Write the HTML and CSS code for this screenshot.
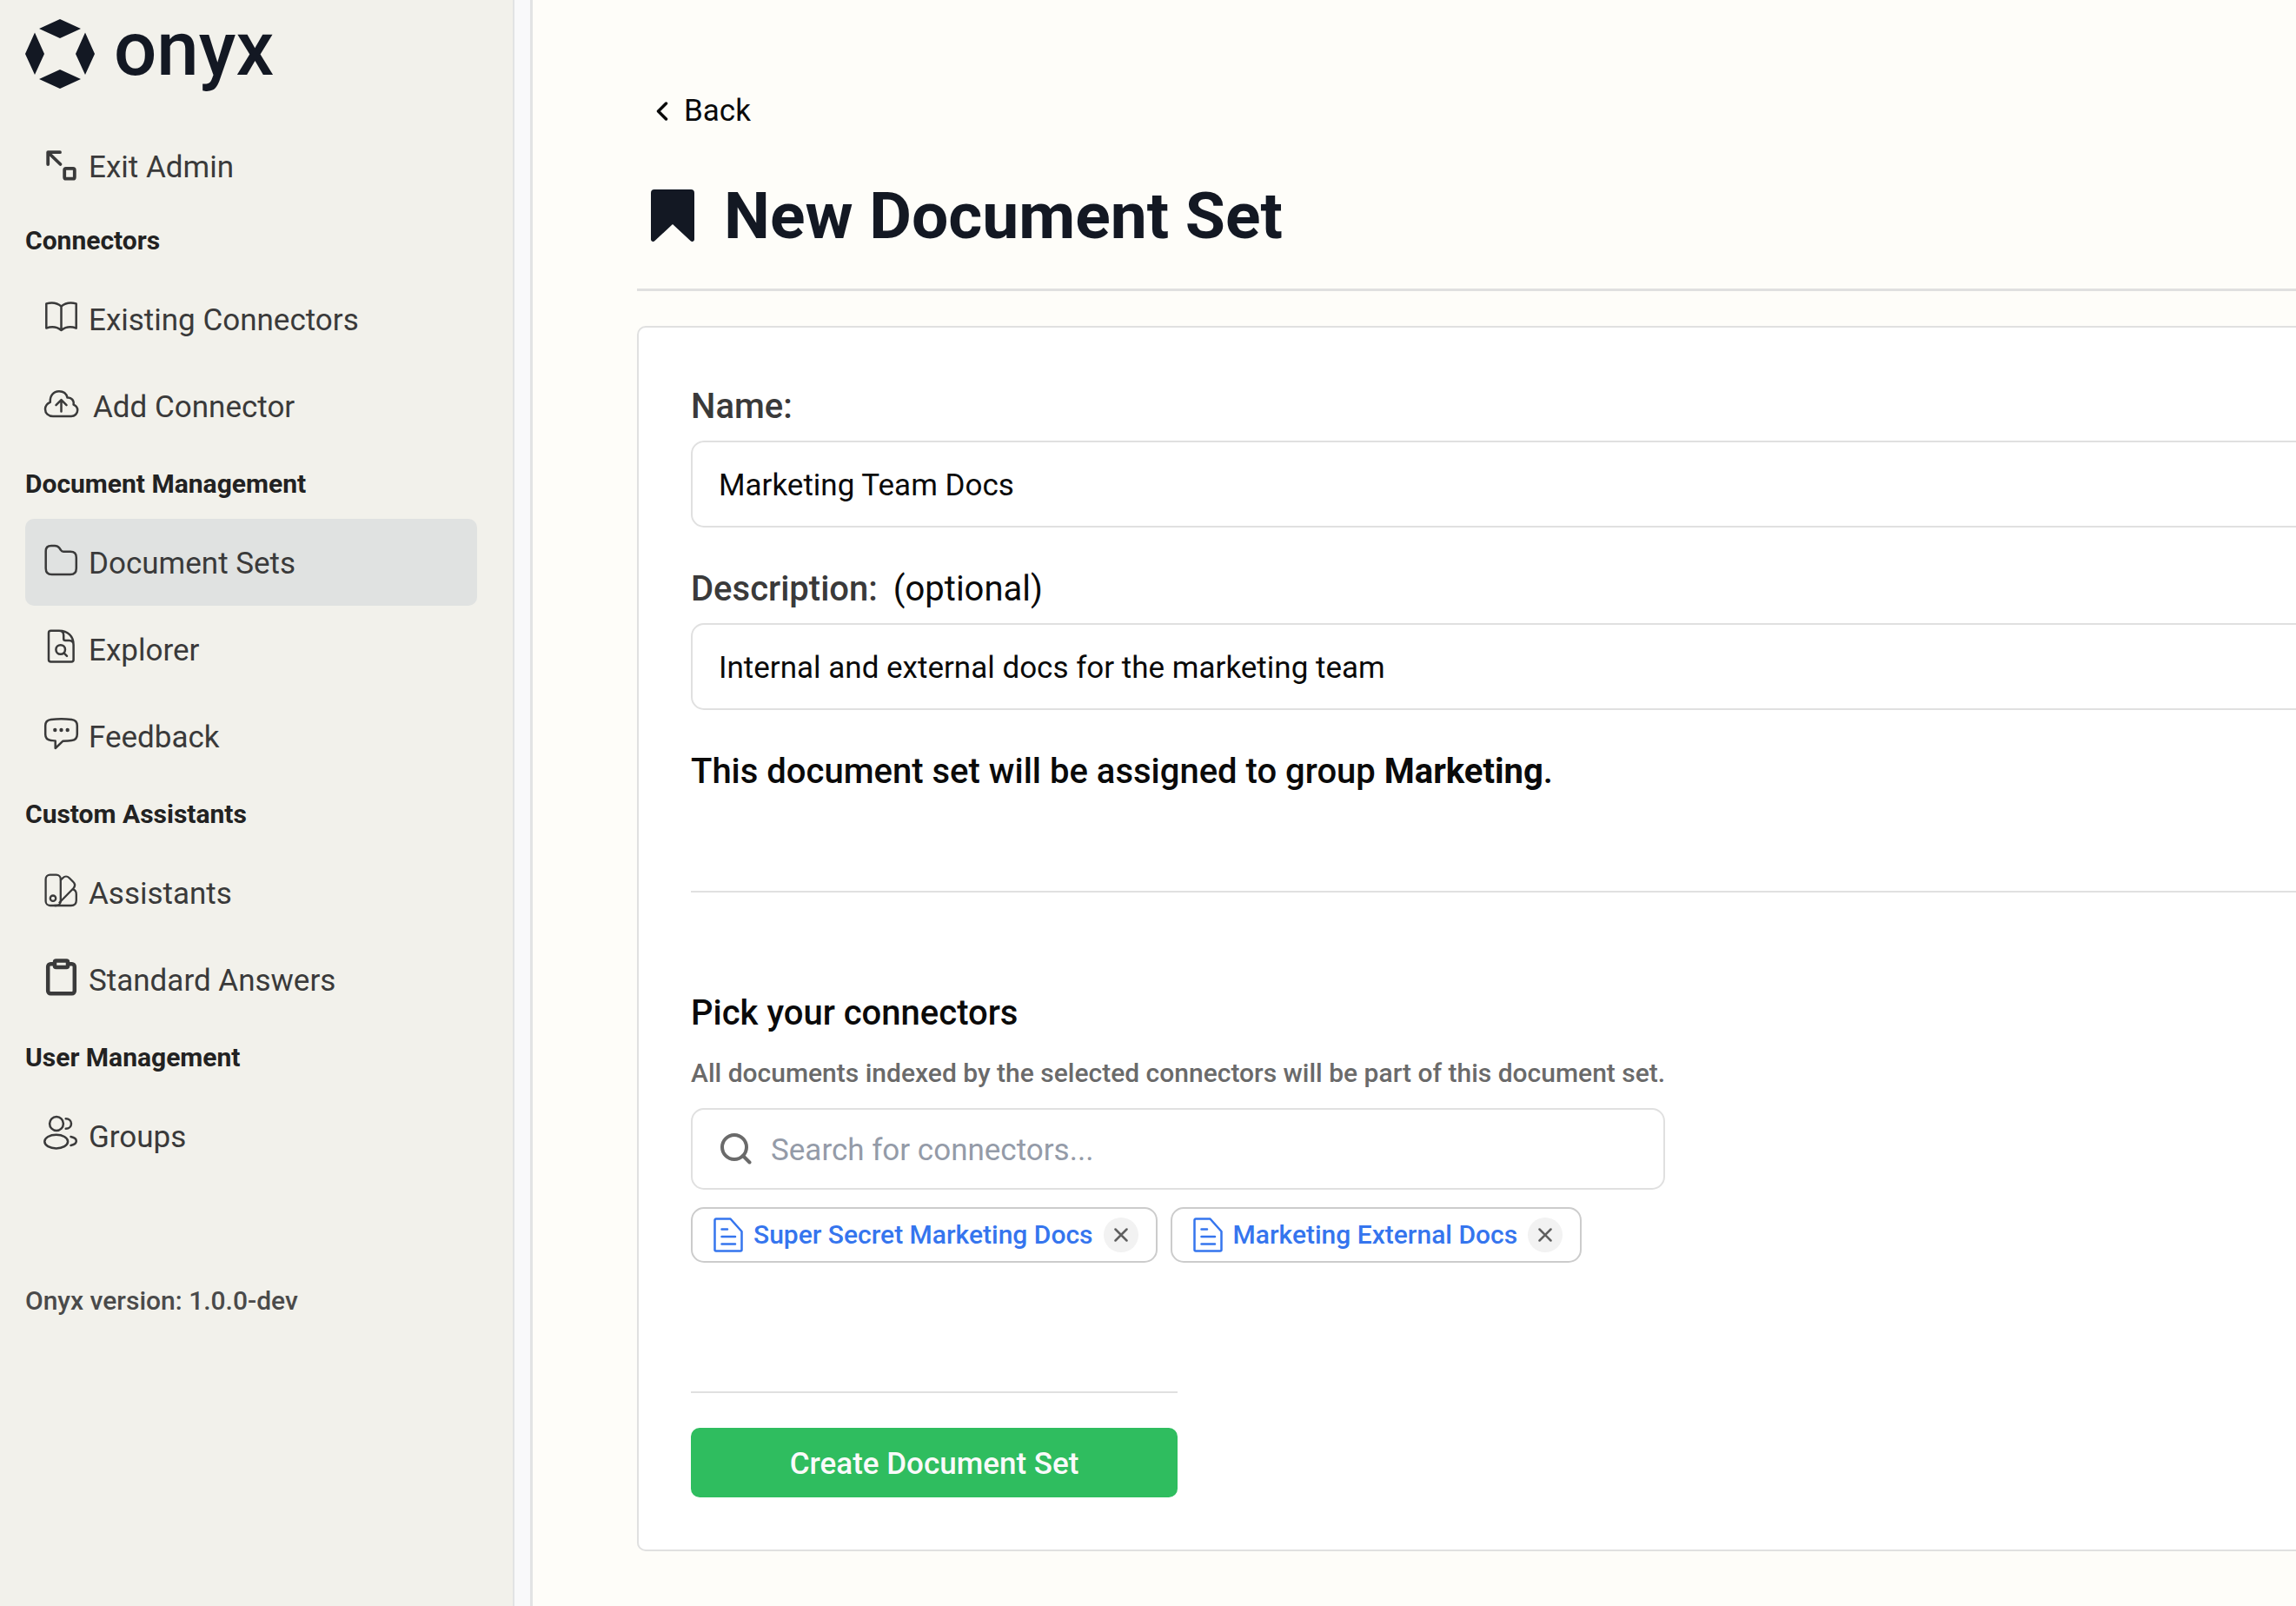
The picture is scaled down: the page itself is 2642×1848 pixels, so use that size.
FILE: index.html
```html
<!DOCTYPE html>
<html lang="en">
<head>
<meta charset="utf-8">
<meta name="viewport" content="width=device-width, initial-scale=1">
<title>New Document Set</title>
<link rel="stylesheet" href="styles.css">
</head>
<body>
<div class="app">
  <aside class="sidebar">
    <a class="brand" href="#">
      <svg class="brand-mark" viewBox="0 0 80 80" aria-hidden="true">
        <path d="M40 0 64 11 40 22 16 11ZM40 58 64 69 40 80 16 69ZM11 15.5 22 40 11 64 0 40ZM69 15.5 80 40 69 64 58 40Z"/>
      </svg>
      <span class="brand-name">onyx</span>
    </a>

    <nav class="nav">
      <a class="nav-item" href="#">
        <svg class="nav-icon" viewBox="0 2 40 48" aria-hidden="true"><g stroke-width="3.8"><path d="M5.2 22V8.2H19M6 9 19.5 22"/><rect x="24.2" y="26.9" width="11.6" height="11.8" rx="1.8"/></g></svg>
        <span>Exit Admin</span>
      </a>

      <h2 class="nav-heading nav-heading-first">Connectors</h2>
      <a class="nav-item" href="#">
        <svg class="nav-icon" viewBox="0 2 40 48" aria-hidden="true"><path d="M20.5 9.5C15.5 5.2 9 4.8 3.3 6.4V34.6C9 32.6 15.5 33 20.5 37C25.5 33 32 32.6 37.7 34.6V6.4C32 4.8 25.5 5.2 20.5 9.5V37"/></svg>
        <span>Existing Connectors</span>
      </a>
      <a class="nav-item nav-item-spaced" href="#">
        <svg class="nav-icon" viewBox="0 2 40 48" aria-hidden="true"><path d="M11 36C5.5 36 2 32.5 2 27.8C2 24 4.4 21.2 7.8 19.8C7.2 12.5 11.5 7.3 18 7.3C23 7.3 26.4 10 27.6 14.6C32.2 14.2 35.4 17.8 34.6 22.6C37.6 23.8 39.2 26.3 39.2 29C39.2 33 36 36 32 36ZM20.5 30.5V17.5M14.5 23.2 20.5 17.2 26.5 23.2"/></svg>
        <span>Add Connector</span>
      </a>

      <h2 class="nav-heading">Document Management</h2>
      <a class="nav-item nav-item-active" href="#" aria-current="page">
        <svg class="nav-icon" viewBox="0 2 40 48" aria-hidden="true"><path d="M2.7 11C2.7 7 5 5 9 5H13C16 5 17 5.8 18.3 7.5L20 10C20.8 11.5 21.5 11.8 23 11.8H31C35.5 11.8 37.8 14 37.8 18.5V31C37.8 35.5 35.5 38 31 38H9.5C5 38 2.7 35.5 2.7 31Z"/></svg>
        <span>Document Sets</span>
      </a>
      <a class="nav-item" href="#">
        <svg class="nav-icon" viewBox="0 2 40 48" aria-hidden="true"><path d="M8.5 2.8H18C28 2.8 34.6 9 34.6 19V36a2.5 2.5 0 0 1-2.5 2.5H8.5A2.5 2.5 0 0 1 6 36V5.3A2.5 2.5 0 0 1 8.5 2.8ZM18 2.8C21.5 2.8 23.2 4.5 23.2 8V12A2 2 0 0 0 25.2 14H29.5C32.8 14 34.6 16 34.6 19"/><circle cx="19.7" cy="24.5" r="5.3"/><path d="M23.5 28.3 27 31.8"/></svg>
        <span>Explorer</span>
      </a>
      <a class="nav-item" href="#">
        <svg class="nav-icon" viewBox="0 2 40 48" aria-hidden="true"><path d="M8.5 5C16 4 25 4 32.5 5C37 5.6 38.8 8 38.8 12V22C38.8 26.5 37 28.5 32.5 29C29 29.5 26 29.6 22.5 29.7L13.7 38V29.5C11.5 29.2 10 29.1 8.5 28.9C4 28.3 2.2 26.5 2.2 22V12C2.2 8 4 5.6 8.5 5Z"/><g class="dot"><circle cx="13.3" cy="17" r="2.2"/><circle cx="20.5" cy="17" r="2.2"/><circle cx="27.7" cy="17" r="2.2"/></g></svg>
        <span>Feedback</span>
      </a>

      <h2 class="nav-heading">Custom Assistants</h2>
      <a class="nav-item" href="#">
        <svg class="nav-icon" viewBox="0 2 40 48" aria-hidden="true"><g stroke-width="2.3"><rect x="2.6" y="3.7" width="17.2" height="35.3" rx="5"/><circle cx="11" cy="30.7" r="3.2"/><path d="M20 9.5 22.3 7.2C24.5 5 27.5 5 29.7 7.2L34 11.5C36.6 14 36.6 16.8 34.4 19.2L18.5 35.5M33.8 20.4C36.6 21 37.8 23 37.8 26V33C37.8 37 35.8 39 31.8 39H13"/></g></svg>
        <span>Assistants</span>
      </a>
      <a class="nav-item" href="#">
        <svg class="nav-icon" viewBox="0 2 40 48" aria-hidden="true"><g stroke-width="4.5"><path d="M12 6.2H8.2A3 3 0 0 0 5.2 9.2V37.2A3 3 0 0 0 8.2 40.2H32.8A3 3 0 0 0 35.8 37.2V9.2A3 3 0 0 0 32.8 6.2H29"/><rect x="13" y="2.6" width="15" height="7.5" rx="1.5"/></g></svg>
        <span>Standard Answers</span>
      </a>

      <h2 class="nav-heading">User Management</h2>
      <a class="nav-item" href="#">
        <svg class="nav-icon" viewBox="0 2 40 48" aria-hidden="true"><circle cx="15" cy="10" r="7.9"/><ellipse cx="14.7" cy="30.6" rx="13.4" ry="7.9"/><path d="M25.7 4.2C29.3 4.2 32 6.7 32 10C32 13.3 29.3 15.8 25.7 15.8M31.5 25C35.3 25.8 37.8 27.7 37.8 30C37.8 32.3 35.3 34.2 31.5 35"/></svg>
        <span>Groups</span>
      </a>
    </nav>

    <p class="version">Onyx version: 1.0.0-dev</p>
  </aside>
  <div class="gutter"></div>

  <main class="main">
    <div class="page">
      <button class="back" type="button">
        <svg class="back-icon" viewBox="0 0 14 22" aria-hidden="true"><path d="M11.5 2 2.5 11 11.5 20"/></svg>
        <span>Back</span>
      </button>

      <header class="page-header">
        <svg class="page-icon" viewBox="0 0 50 60" aria-hidden="true"><path d="M4 0H46a4 4 0 0 1 4 4V57.5a2.5 2.5 0 0 1-4.3 1.7L25 40 4.3 59.2A2.5 2.5 0 0 1 0 57.5V4a4 4 0 0 1 4-4Z"/></svg>
        <h1 class="page-title">New Document Set</h1>
      </header>

      <form class="card">
        <div class="field">
          <label class="label" for="name">Name:</label>
          <input class="input" id="name" type="text" value="Marketing Team Docs">
        </div>
        <div class="field">
          <div class="label-row">
            <label class="label" for="description">Description:</label>
            <span class="optional">(optional)</span>
          </div>
          <input class="input" id="description" type="text" value="Internal and external docs for the marketing team">
        </div>
        <p class="notice">This document set will be assigned to group <strong>Marketing</strong>.</p>

        <hr class="divider">

        <section class="picker">
          <h2 class="picker-title">Pick your connectors</h2>
          <p class="picker-hint">All documents indexed by the selected connectors will be part of this document set.</p>
          <div class="search">
            <svg class="search-icon" viewBox="0 0 36 36" aria-hidden="true"><circle cx="16" cy="16" r="14"/><path d="M26 26 33.5 33.5"/></svg>
            <input class="search-input" type="text" placeholder="Search for connectors..." aria-label="Search for connectors">
          </div>
          <div class="chips">
            <div class="chip">
              <svg class="chip-icon" viewBox="0 0 34 40" aria-hidden="true"><path d="M3 1.5H19.5L32.5 16V37a1.5 1.5 0 0 1-1.5 1.5H3A1.5 1.5 0 0 1 1.5 37V3A1.5 1.5 0 0 1 3 1.5ZM9.5 13.500H16M9.5 22H25M9.5 30.500H25"/></svg>
              <span>Super Secret Marketing Docs</span>
              <button class="chip-remove" type="button" aria-label="Remove Super Secret Marketing Docs"><svg viewBox="0 0 16 16" aria-hidden="true"><path d="M1.5 1.5 14.5 14.5M14.5 1.5 1.5 14.5"/></svg></button>
            </div>
            <div class="chip">
              <svg class="chip-icon" viewBox="0 0 34 40" aria-hidden="true"><path d="M3 1.5H19.5L32.5 16V37a1.5 1.5 0 0 1-1.5 1.5H3A1.5 1.5 0 0 1 1.5 37V3A1.5 1.5 0 0 1 3 1.5ZM9.5 13.500H16M9.5 22H25M9.5 30.500H25"/></svg>
              <span>Marketing External Docs</span>
              <button class="chip-remove" type="button" aria-label="Remove Marketing External Docs"><svg viewBox="0 0 16 16" aria-hidden="true"><path d="M1.5 1.5 14.5 14.5M14.5 1.5 1.5 14.5"/></svg></button>
            </div>
          </div>
        </section>

        <div class="actions">
          <button class="submit" type="submit">Create Document Set</button>
        </div>
      </form>
    </div>
  </main>
</div>
</body>
</html>
```
FILE: styles.css
```css
* {
  box-sizing: border-box;
}

body {
  margin: 0;
  background: #fefdf9;
  color: #0a0a0a;
  font-family: Roboto, "Liberation Sans", sans-serif;
  font-size: 35px;
  line-height: 40px;
}

h1, h2, p {
  margin: 0;
}

a {
  color: inherit;
  text-decoration: none;
}

button, input {
  font: inherit;
  color: inherit;
}

svg {
  display: block;
  flex: none;
}

.app {
  display: flex;
  min-height: 100vh;
}

/* Sidebar */

.sidebar {
  flex: none;
  width: 592px;
  padding: 22px 41px 40px 29px;
  border-right: 2px solid #e2e3e4;
  background: #f2f1eb;
}

.gutter {
  flex: none;
  width: 21px;
  border-right: 3px solid #e2e3e4;
  background: #f9f9fa;
}

.brand {
  display: flex;
  gap: 22px;
  color: #131823;
}

.brand-mark {
  width: 80px;
  height: 80px;
  fill: currentColor;
}

.brand-name {
  font-size: 87px;
  line-height: 68px;
  font-weight: 500;
}

.nav {
  margin-top: 39px;
}

.nav-item {
  display: flex;
  align-items: center;
  gap: 12px;
  height: 100px;
  padding: 4px 21px 0;
  border-radius: 10px;
  color: #3a3a3a;
}

.nav-item-spaced {
  gap: 17px;
}

.nav-item-active {
  background: #e0e2e1;
}

.nav-icon {
  width: 40px;
  height: 48px;
  fill: none;
  stroke: currentColor;
  stroke-width: 2.5;
  stroke-linecap: round;
  stroke-linejoin: round;
  overflow: visible;
}

.nav-icon .dot {
  fill: currentColor;
  stroke: none;
}

.nav-heading {
  padding: 20px 0;
  color: #222;
  font-size: 30px;
  line-height: 40px;
  font-weight: 700;
}

.nav-heading-first {
  padding-top: 16px;
}

.version {
  margin-top: 120px;
  color: #4a4a4a;
  font-size: 30px;
  font-weight: 500;
}

/* Page */

.main {
  flex: 1;
  min-width: 0;
  overflow: hidden;
}

.page {
  margin-right: -120px;
  padding: 108px 0 60px 120px;
}

.back {
  display: flex;
  align-items: center;
  gap: 18px;
  padding: 0 0 0 22px;
  border: 0;
  background: none;
}

.back-icon {
  width: 14px;
  height: 22px;
  fill: none;
  stroke: currentColor;
  stroke-width: 3.5;
  stroke-linecap: round;
  stroke-linejoin: round;
}

.page-header {
  display: flex;
  align-items: center;
  gap: 34px;
  margin-top: 55px;
  padding: 0 16px 39px;
  border-bottom: 3px solid #e0e0e0;
  color: #131823;
}

.page-icon {
  width: 50px;
  height: 60px;
  fill: currentColor;
}

.page-title {
  font-size: 75px;
  line-height: 90px;
  font-weight: 700;
}

.card {
  margin-top: 40px;
  padding: 66px 60px 60px;
  border: 2px solid #e0e0e0;
  border-radius: 10px;
  background: #fff;
}

.field {
  display: flex;
  flex-direction: column;
  gap: 14px;
  margin-bottom: 46px;
}

.label-row {
  display: flex;
  gap: 18px;
}

.label,
.optional,
.notice,
.picker-title {
  font-size: 40px;
  line-height: 50px;
}

.label {
  color: #3a3a3a;
  font-weight: 500;
}

.input {
  width: 100%;
  height: 100px;
  padding: 3px 30px 0;
  border: 2px solid #e0e0e0;
  border-radius: 15px;
  background: #fff;
}

.notice {
  font-weight: 500;
}

.notice strong {
  font-weight: 700;
}

.divider {
  height: 2px;
  margin: 112px 0 114px;
  border: 0;
  background: #e0e0e0;
}

.picker {
  width: fit-content;
}

.picker-title {
  font-weight: 500;
}

.picker-hint {
  margin-top: 24px;
  color: #6a6a6a;
  font-size: 30px;
  font-weight: 500;
}

.search {
  display: flex;
  align-items: center;
  gap: 22px;
  height: 94px;
  margin-top: 20px;
  padding: 0 32px;
  border: 2px solid #e0e0e0;
  border-radius: 15px;
}

.search-icon {
  width: 36px;
  height: 36px;
  fill: none;
  stroke: #6a6a6a;
  stroke-width: 4;
  stroke-linecap: round;
}

.search-input {
  flex: 1;
  min-width: 0;
  padding: 3px 0 0;
  border: 0;
  background: none;
}

.search-input::placeholder {
  color: #949ba8;
  opacity: 1;
}

.chips {
  display: flex;
  flex-wrap: wrap;
  gap: 15px;
  margin-top: 20px;
}

.chip {
  display: flex;
  align-items: center;
  gap: 12px;
  height: 64px;
  padding: 0 20px 0 24px;
  border: 2px solid #ccc;
  border-radius: 15px;
  color: #3575ee;
  font-size: 30px;
  font-weight: 500;
}

.chip-icon {
  width: 34px;
  height: 40px;
  fill: none;
  stroke: currentColor;
  stroke-width: 2.5;
  stroke-linecap: round;
  stroke-linejoin: round;
}

.chip-remove {
  display: grid;
  place-items: center;
  width: 40px;
  height: 40px;
  padding: 0;
  border: 0;
  border-radius: 50%;
  background: #f2f2f2;
  color: #606060;
}

.chip-remove svg {
  width: 16px;
  height: 16px;
  fill: none;
  stroke: currentColor;
  stroke-width: 2.5;
  stroke-linecap: round;
}

.actions {
  width: 560px;
  margin-top: 148px;
  padding-top: 40px;
  border-top: 2px solid #e0e0e0;
}

.submit {
  width: 100%;
  height: 80px;
  padding: 3px 0 0;
  border: 0;
  border-radius: 10px;
  background: #2fbd5f;
  color: #fafafa;
  font-weight: 500;
}
```
